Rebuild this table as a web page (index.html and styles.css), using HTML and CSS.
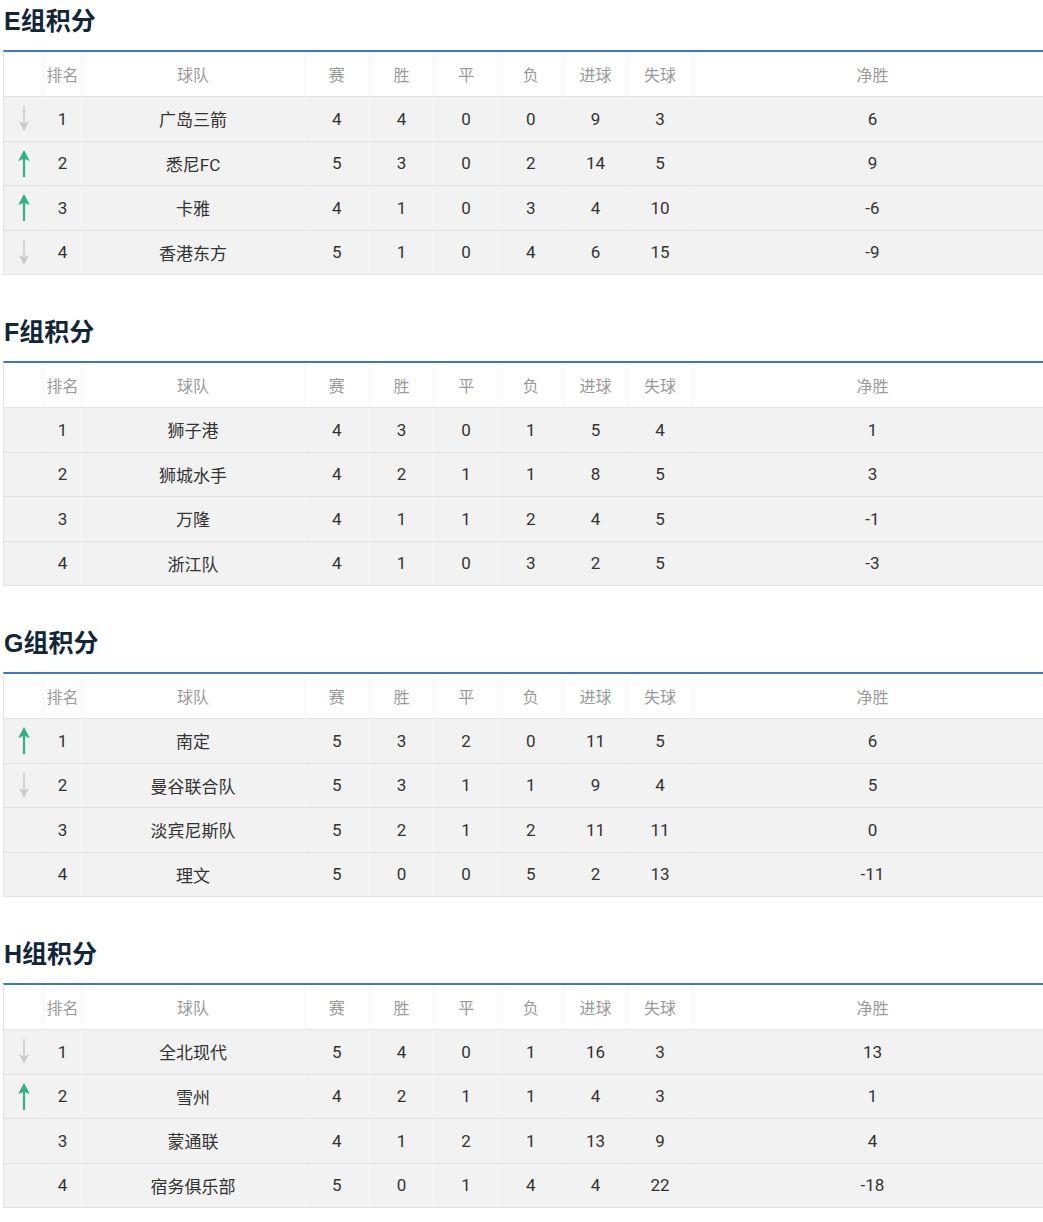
FILE: index.html
```html
<!DOCTYPE html>
<html lang="zh-CN">
<head>
<meta charset="utf-8">
<title>积分</title>
<link rel="stylesheet" href="styles.css">
</head>
<body>
<div class="page">

<section class="group">
  <h2 class="group-title">E组积分</h2>
  <div class="table">
    <div class="row head"><div class="c"></div><div class="c">排名</div><div class="c">球队</div><div class="c">赛</div><div class="c">胜</div><div class="c">平</div><div class="c">负</div><div class="c">进球</div><div class="c">失球</div><div class="c">净胜</div></div>
    <div class="row"><div class="c"><svg class="arr down" viewBox="0 0 14 28"><rect x="6.1" y="0" width="1.8" height="20"/><polygon points="7,28 12.5,17 7,19.5 1.5,17"/></svg></div><div class="c">1</div><div class="c">广岛三箭</div><div class="c">4</div><div class="c">4</div><div class="c">0</div><div class="c">0</div><div class="c">9</div><div class="c">3</div><div class="c">6</div></div>
    <div class="row"><div class="c"><svg class="arr up" viewBox="0 0 14 28"><rect x="5.9" y="8" width="2.2" height="20"/><polygon points="7,0 13,11.5 7,9 1,11.5"/></svg></div><div class="c">2</div><div class="c">悉尼FC</div><div class="c">5</div><div class="c">3</div><div class="c">0</div><div class="c">2</div><div class="c">14</div><div class="c">5</div><div class="c">9</div></div>
    <div class="row"><div class="c"><svg class="arr up" viewBox="0 0 14 28"><rect x="5.9" y="8" width="2.2" height="20"/><polygon points="7,0 13,11.5 7,9 1,11.5"/></svg></div><div class="c">3</div><div class="c">卡雅</div><div class="c">4</div><div class="c">1</div><div class="c">0</div><div class="c">3</div><div class="c">4</div><div class="c">10</div><div class="c">-6</div></div>
    <div class="row"><div class="c"><svg class="arr down" viewBox="0 0 14 28"><rect x="6.1" y="0" width="1.8" height="20"/><polygon points="7,28 12.5,17 7,19.5 1.5,17"/></svg></div><div class="c">4</div><div class="c">香港东方</div><div class="c">5</div><div class="c">1</div><div class="c">0</div><div class="c">4</div><div class="c">6</div><div class="c">15</div><div class="c">-9</div></div>
  </div>
</section>

<section class="group">
  <h2 class="group-title">F组积分</h2>
  <div class="table">
    <div class="row head"><div class="c"></div><div class="c">排名</div><div class="c">球队</div><div class="c">赛</div><div class="c">胜</div><div class="c">平</div><div class="c">负</div><div class="c">进球</div><div class="c">失球</div><div class="c">净胜</div></div>
    <div class="row"><div class="c"></div><div class="c">1</div><div class="c">狮子港</div><div class="c">4</div><div class="c">3</div><div class="c">0</div><div class="c">1</div><div class="c">5</div><div class="c">4</div><div class="c">1</div></div>
    <div class="row"><div class="c"></div><div class="c">2</div><div class="c">狮城水手</div><div class="c">4</div><div class="c">2</div><div class="c">1</div><div class="c">1</div><div class="c">8</div><div class="c">5</div><div class="c">3</div></div>
    <div class="row"><div class="c"></div><div class="c">3</div><div class="c">万隆</div><div class="c">4</div><div class="c">1</div><div class="c">1</div><div class="c">2</div><div class="c">4</div><div class="c">5</div><div class="c">-1</div></div>
    <div class="row"><div class="c"></div><div class="c">4</div><div class="c">浙江队</div><div class="c">4</div><div class="c">1</div><div class="c">0</div><div class="c">3</div><div class="c">2</div><div class="c">5</div><div class="c">-3</div></div>
  </div>
</section>

<section class="group">
  <h2 class="group-title">G组积分</h2>
  <div class="table">
    <div class="row head"><div class="c"></div><div class="c">排名</div><div class="c">球队</div><div class="c">赛</div><div class="c">胜</div><div class="c">平</div><div class="c">负</div><div class="c">进球</div><div class="c">失球</div><div class="c">净胜</div></div>
    <div class="row"><div class="c"><svg class="arr up" viewBox="0 0 14 28"><rect x="5.9" y="8" width="2.2" height="20"/><polygon points="7,0 13,11.5 7,9 1,11.5"/></svg></div><div class="c">1</div><div class="c">南定</div><div class="c">5</div><div class="c">3</div><div class="c">2</div><div class="c">0</div><div class="c">11</div><div class="c">5</div><div class="c">6</div></div>
    <div class="row"><div class="c"><svg class="arr down" viewBox="0 0 14 28"><rect x="6.1" y="0" width="1.8" height="20"/><polygon points="7,28 12.5,17 7,19.5 1.5,17"/></svg></div><div class="c">2</div><div class="c">曼谷联合队</div><div class="c">5</div><div class="c">3</div><div class="c">1</div><div class="c">1</div><div class="c">9</div><div class="c">4</div><div class="c">5</div></div>
    <div class="row"><div class="c"></div><div class="c">3</div><div class="c">淡宾尼斯队</div><div class="c">5</div><div class="c">2</div><div class="c">1</div><div class="c">2</div><div class="c">11</div><div class="c">11</div><div class="c">0</div></div>
    <div class="row"><div class="c"></div><div class="c">4</div><div class="c">理文</div><div class="c">5</div><div class="c">0</div><div class="c">0</div><div class="c">5</div><div class="c">2</div><div class="c">13</div><div class="c">-11</div></div>
  </div>
</section>

<section class="group">
  <h2 class="group-title">H组积分</h2>
  <div class="table">
    <div class="row head"><div class="c"></div><div class="c">排名</div><div class="c">球队</div><div class="c">赛</div><div class="c">胜</div><div class="c">平</div><div class="c">负</div><div class="c">进球</div><div class="c">失球</div><div class="c">净胜</div></div>
    <div class="row"><div class="c"><svg class="arr down" viewBox="0 0 14 28"><rect x="6.1" y="0" width="1.8" height="20"/><polygon points="7,28 12.5,17 7,19.5 1.5,17"/></svg></div><div class="c">1</div><div class="c">全北现代</div><div class="c">5</div><div class="c">4</div><div class="c">0</div><div class="c">1</div><div class="c">16</div><div class="c">3</div><div class="c">13</div></div>
    <div class="row"><div class="c"><svg class="arr up" viewBox="0 0 14 28"><rect x="5.9" y="8" width="2.2" height="20"/><polygon points="7,0 13,11.5 7,9 1,11.5"/></svg></div><div class="c">2</div><div class="c">雪州</div><div class="c">4</div><div class="c">2</div><div class="c">1</div><div class="c">1</div><div class="c">4</div><div class="c">3</div><div class="c">1</div></div>
    <div class="row"><div class="c"></div><div class="c">3</div><div class="c">蒙通联</div><div class="c">4</div><div class="c">1</div><div class="c">2</div><div class="c">1</div><div class="c">13</div><div class="c">9</div><div class="c">4</div></div>
    <div class="row"><div class="c"></div><div class="c">4</div><div class="c">宿务俱乐部</div><div class="c">5</div><div class="c">0</div><div class="c">1</div><div class="c">4</div><div class="c">4</div><div class="c">22</div><div class="c">-18</div></div>
  </div>
</section>

</div>
</body>
</html>
```

FILE: styles.css
```css
* { box-sizing: border-box; }
html, body {
  margin: 0;
  padding: 0;
  background: #ffffff;
  overflow-x: hidden;
}
body {
  font-family: "Roboto", "Noto Sans CJK SC", "Noto Sans", sans-serif;
  color: #333333;
}
.page {
  padding-left: 3px;
  width: 1043px;
  overflow: hidden;
}
.group {
  margin-bottom: 36px;
}
.group-title {
  margin: 0 0 8px 1px;
  font-family: "Liberation Sans", "Noto Sans CJK SC", sans-serif;
  font-size: 25px;
  line-height: 42px;
  font-weight: 700;
  color: #12263a;
}
.table {
  width: 1050px;
  border-top: 2px solid #3a78c9;
  border-left: 1px solid #e3e3e3;
}
.row {
  display: grid;
  grid-template-columns: 40px 38px 223px repeat(6, 64.667px) 360px;
  height: 44.5px;
  background: #f2f2f2;
  border-bottom: 1px solid #e2e2e2;
  font-size: 17px;
  font-weight: 400;
  color: #333333;
}
.row.head {
  height: 45px;
  background: #ffffff;
  font-size: 16px;
  color: #9a9a9a;
  border-bottom: 1px solid #e4e4e4;
}
.c {
  display: flex;
  align-items: center;
  justify-content: center;
  border-right: 1px solid #f6f6f6;
  white-space: nowrap;
}
.row.head .c {
  border-right-color: #f6f6f6;
}
.arr {
  width: 14px;
  height: 27px;
  display: block;
}
.arr.up { fill: #2bb386; }
.arr.down { fill: #cccccc; height: 25px; }
```
